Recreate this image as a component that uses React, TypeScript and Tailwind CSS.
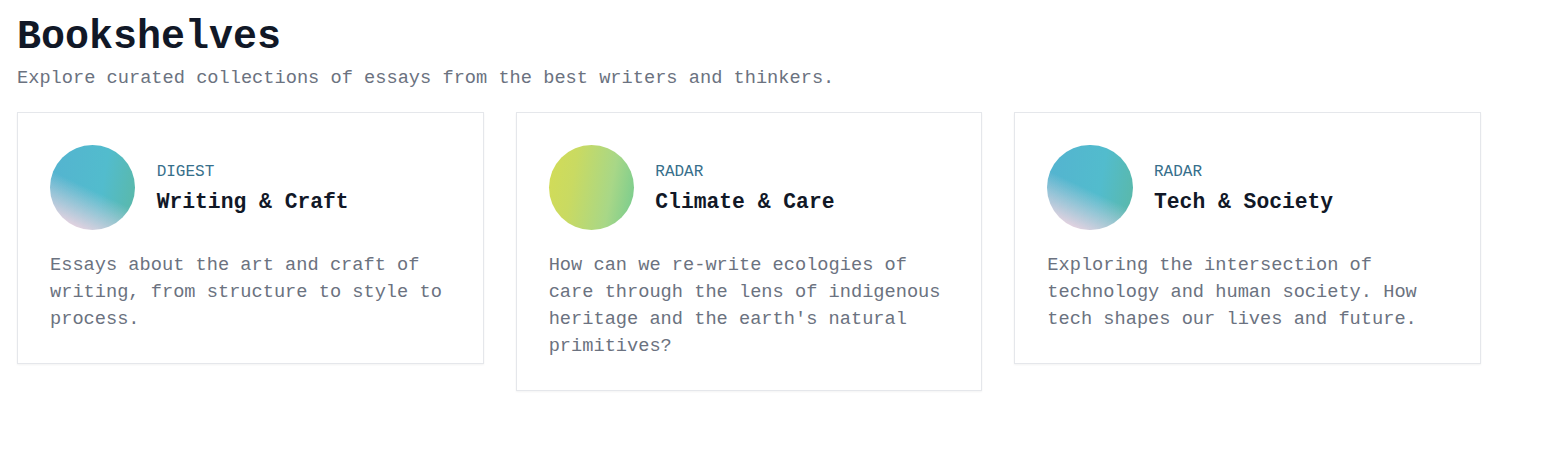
import React from "react";

type Shelf = {
  kind: string;
  title: string;
  text: string[];
  avatar: string;
};

const blue =
  "bg-[linear-gradient(205deg,rgba(205,205,222,0)_52%,rgba(190,205,220,0.6)_68%,rgba(226,210,224,1)_88%),linear-gradient(100deg,#54b3d0_0%,#52bccd_60%,#5bb8a6_100%)]";
const green = "bg-[linear-gradient(100deg,#d3dc56_0%,#c9da62_30%,#a8d787_70%,#74cb8f_100%)]";

const shelves: Shelf[] = [
  {
    kind: "DIGEST",
    title: "Writing & Craft",
    text: ["Essays about the art and craft of", "writing, from structure to style to", "process."],
    avatar: blue,
  },
  {
    kind: "RADAR",
    title: "Climate & Care",
    text: [
      "How can we re-write ecologies of",
      "care through the lens of indigenous",
      "heritage and the earth's natural",
      "primitives?",
    ],
    avatar: green,
  },
  {
    kind: "RADAR",
    title: "Tech & Society",
    text: ["Exploring the intersection of", "technology and human society. How", "tech shapes our lives and future."],
    avatar: blue,
  },
];

export default function App() {
  return (
    <div className="min-h-[468px] bg-white pl-[17px] pr-[69px] pt-[12px] font-['Liberation_Mono',monospace]">
      <h1 className="text-[40px] leading-[52px] font-bold text-[#111827]">Bookshelves</h1>
      <p className="mt-[1px] text-[18.67px] leading-[27px] text-[#6b7280]">
        Explore curated collections of essays from the best writers and thinkers.
      </p>

      <div className="mt-[20px] grid grid-cols-3 items-start gap-[32px]">
        {shelves.map((shelf) => (
          <div
            key={shelf.title}
            className="border border-[#e5e7eb] bg-white px-[32px] pt-[32px] pb-[30px] shadow-[0_1px_2px_rgba(0,0,0,0.05)]"
          >
            <div className="flex items-center gap-[21.33px]">
              <div className={`h-[85.33px] w-[85.33px] shrink-0 rounded-full ${shelf.avatar}`} />
              <div className="flex flex-col">
                <span className="text-[16px] leading-[28px] text-[#376f8b]">{shelf.kind}</span>
                <span className="text-[21.33px] leading-[32px] font-bold text-[#111827]">{shelf.title}</span>
              </div>
            </div>
            <p className="mt-[22px] text-[18.67px] leading-[27px] text-[#6b7280]">
              {shelf.text.map((line) => (
                <span key={line} className="block">
                  {line}
                </span>
              ))}
            </p>
          </div>
        ))}
      </div>
    </div>
  );
}
